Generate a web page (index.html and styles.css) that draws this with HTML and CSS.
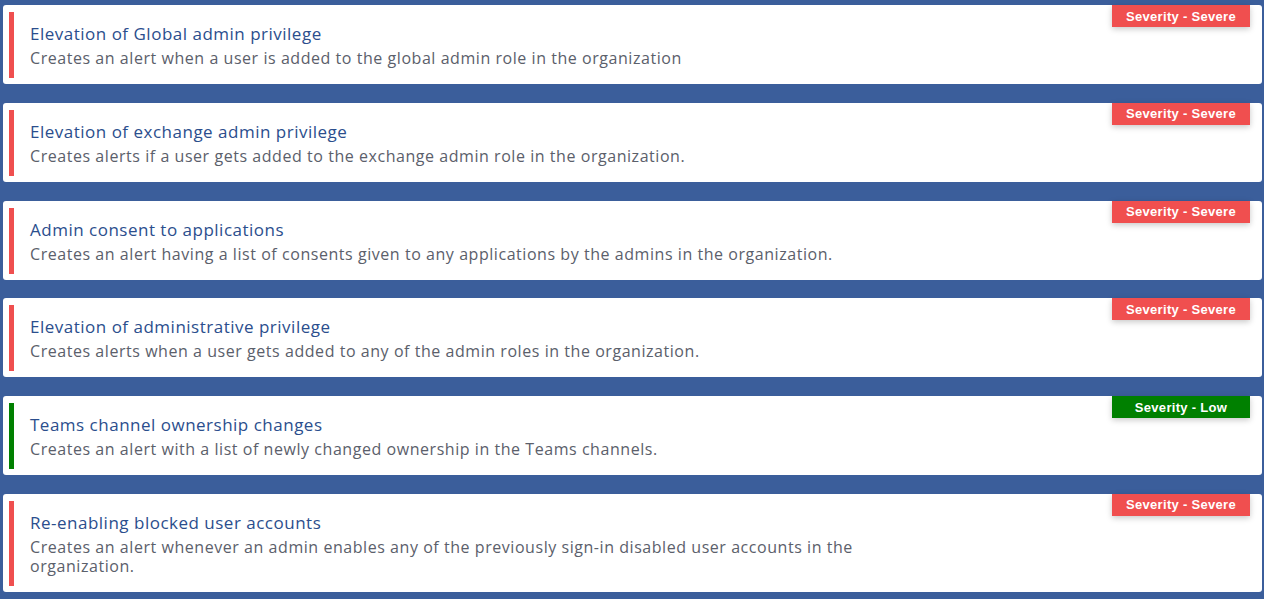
FILE: index.html
```html
<!DOCTYPE html>
<html lang="en">
<head>
<meta charset="utf-8">
<title>Alert policies</title>
<link rel="stylesheet" href="styles.css">
</head>
<body>
<main class="list">
  <article class="card severe">
    <span class="bar"></span>
    <div class="text">
      <h3 class="title">Elevation of Global admin privilege</h3>
      <p class="desc">Creates an alert when a user is added to the global admin role in the organization</p>
    </div>
    <span class="badge">Severity - Severe</span>
  </article>
  <article class="card severe">
    <span class="bar"></span>
    <div class="text">
      <h3 class="title">Elevation of exchange admin privilege</h3>
      <p class="desc">Creates alerts if a user gets added to the exchange admin role in the organization.</p>
    </div>
    <span class="badge">Severity - Severe</span>
  </article>
  <article class="card severe">
    <span class="bar"></span>
    <div class="text">
      <h3 class="title">Admin consent to applications</h3>
      <p class="desc">Creates an alert having a list of consents given to any applications by the admins in the organization.</p>
    </div>
    <span class="badge">Severity - Severe</span>
  </article>
  <article class="card severe">
    <span class="bar"></span>
    <div class="text">
      <h3 class="title">Elevation of administrative privilege</h3>
      <p class="desc">Creates alerts when a user gets added to any of the admin roles in the organization.</p>
    </div>
    <span class="badge">Severity - Severe</span>
  </article>
  <article class="card low">
    <span class="bar"></span>
    <div class="text">
      <h3 class="title">Teams channel ownership changes</h3>
      <p class="desc">Creates an alert with a list of newly changed ownership in the Teams channels.</p>
    </div>
    <span class="badge">Severity - Low</span>
  </article>
  <article class="card severe">
    <span class="bar"></span>
    <div class="text">
      <h3 class="title">Re-enabling blocked user accounts</h3>
      <p class="desc">Creates an alert whenever an admin enables any of the previously sign-in disabled user accounts in the organization.</p>
    </div>
    <span class="badge">Severity - Severe</span>
  </article>
</main>
</body>
</html>
```
FILE: styles.css
```css
html, body {
  margin: 0;
  padding: 0;
  background: #3b5e9b;
}

body {
  font-family: "Open Sans", "Noto Sans", sans-serif;
}

.list {
  display: flex;
  flex-direction: column;
  gap: 18.8px;
  padding: 5px 2px 0 3px;
}

.card {
  position: relative;
  display: flex;
  align-items: stretch;
  gap: 16px;
  background: #ffffff;
  border-radius: 3px;
  padding: 7px 6px 6px 6px;
}

.bar {
  flex: 0 0 5px;
  width: 5px;
}

.severe .bar { background: #ef4f4f; }
.low .bar { background: #008000; }

.text {
  padding: 10px 0 10px 0;
}

.title {
  margin: 0;
  font-size: 17px;
  line-height: 24px;
  font-weight: 500;
  letter-spacing: 0.5px;
  color: #2b4e8d;
}

.desc {
  margin: 3px 0 0 0;
  max-width: 845px;
  font-size: 16px;
  line-height: 19px;
  font-weight: 400;
  letter-spacing: 0.55px;
  color: #5b606b;
}

.badge {
  position: absolute;
  top: 0;
  right: 12px;
  width: 138px;
  height: 22px;
  display: flex;
  align-items: center;
  justify-content: center;
  font-family: "Liberation Sans", Arial, sans-serif;
  font-size: 13px;
  font-weight: 700;
  letter-spacing: 0.3px;
  color: #ffffff;
  box-shadow: 0 2px 6px rgba(0, 0, 0, 0.22);
}

.severe .badge { background: #f04f4f; }
.low .badge { background: #008000; }
```
